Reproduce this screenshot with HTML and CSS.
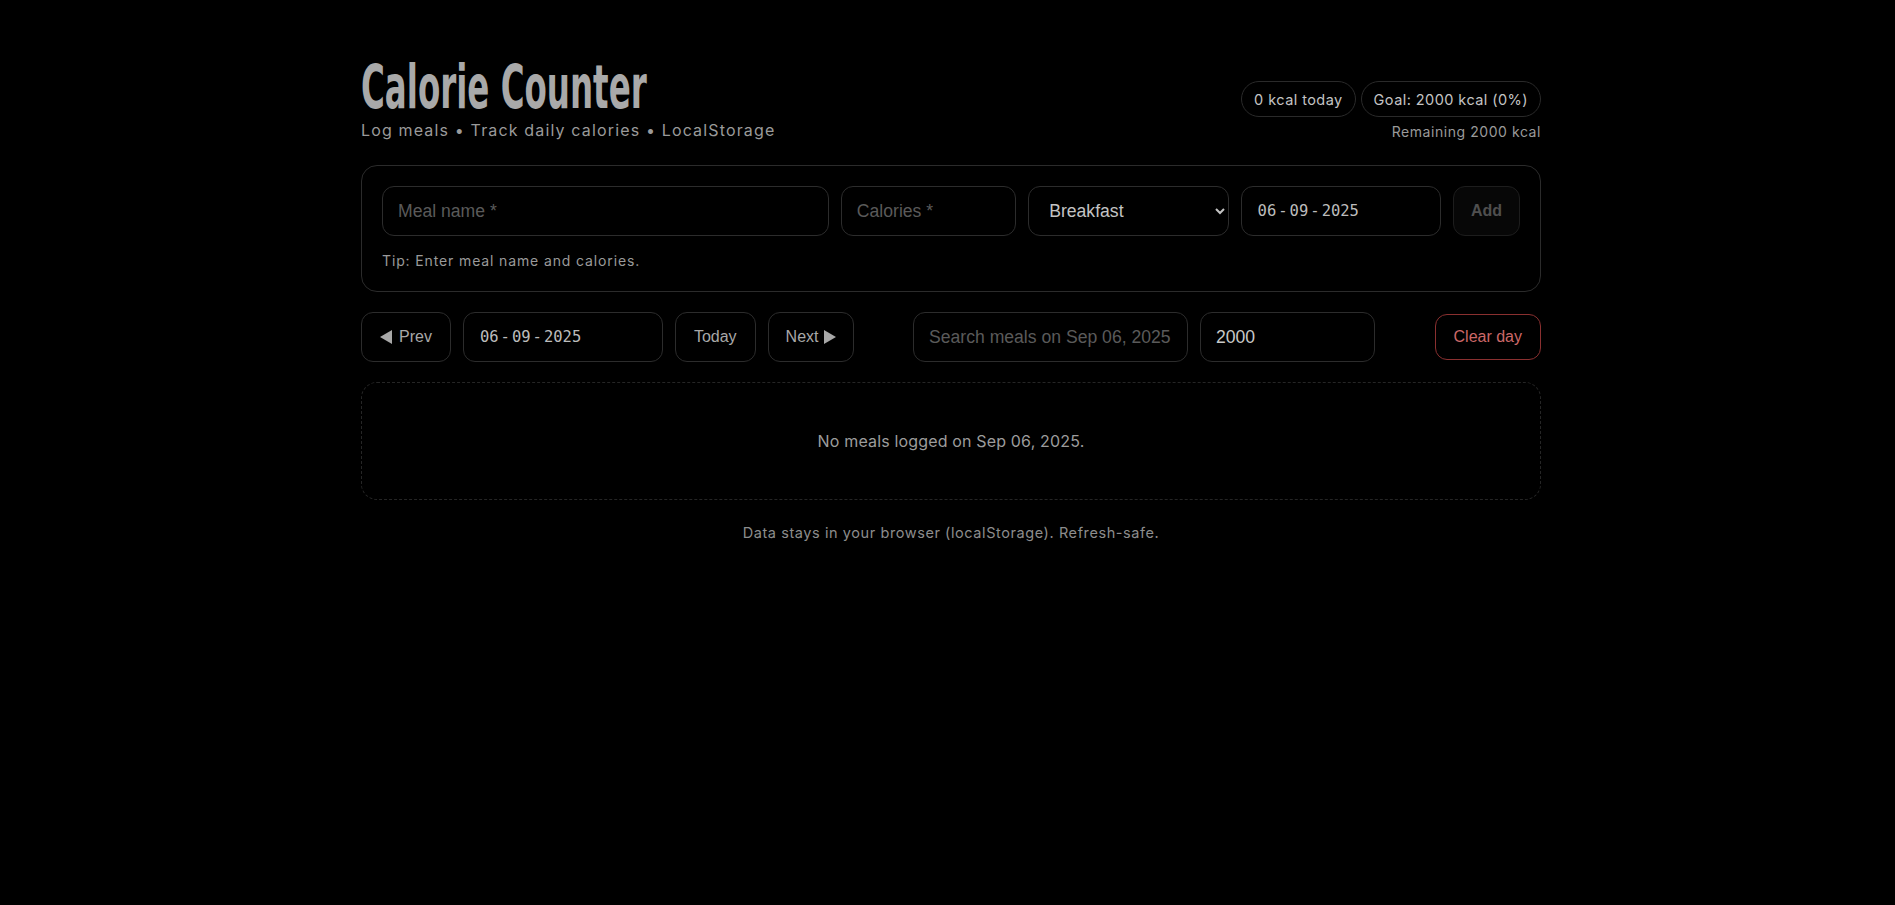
FILE: index.html
```html
<!DOCTYPE html>
<html lang="en">
<head>
<meta charset="utf-8">
<title>Calorie Counter</title>
<link rel="stylesheet" href="styles.css">
</head>
<body>
<div class="app">
  <header class="header">
    <div class="brand">
      <h1 class="title">Calorie Counter</h1>
      <p class="subtitle">Log meals • Track daily calories • LocalStorage</p>
    </div>
    <div class="stats">
      <div class="pills">
        <span class="pill">0 kcal today</span>
        <span class="pill">Goal: 2000 kcal (0%)</span>
      </div>
      <div class="remaining">Remaining 2000 kcal</div>
    </div>
  </header>

  <section class="card">
    <form class="entry">
      <input class="field" type="text" placeholder="Meal name *">
      <input class="field" type="text" placeholder="Calories *">
      <select class="field select">
        <option>Breakfast</option>
        <option>Lunch</option>
        <option>Dinner</option>
        <option>Snack</option>
      </select>
      <div class="field datefield"><span>06</span><span class="sep">-</span><span>09</span><span class="sep">-</span><span>2025</span></div>
      <button class="btn btn-add" type="button" disabled>Add</button>
    </form>
    <p class="tip">Tip: Enter meal name and calories.</p>
  </section>

  <div class="toolbar">
    <div class="group">
      <button class="btn" type="button"><svg class="tri" width="12" height="14" viewBox="0 0 12 14"><polygon points="12,0 12,14 0,7" fill="currentColor"/></svg>Prev</button>
      <div class="field datefield nav-date"><span>06</span><span class="sep">-</span><span>09</span><span class="sep">-</span><span>2025</span></div>
      <button class="btn" type="button">Today</button>
      <button class="btn btn-next" type="button">Next<svg class="tri tri-right" width="12" height="14" viewBox="0 0 12 14"><polygon points="0,0 0,14 12,7" fill="currentColor"/></svg></button>
    </div>
    <div class="group">
      <input class="field search" type="text" placeholder="Search meals on Sep 06, 2025">
      <input class="field goal" type="text" value="2000">
    </div>
    <button class="btn btn-danger" type="button">Clear day</button>
  </div>

  <div class="empty">No meals logged on Sep 06, 2025.</div>

  <p class="footer">Data stays in your browser (localStorage). Refresh-safe.</p>
</div>
</body>
</html>
```

FILE: styles.css
```css
* { box-sizing: border-box; }

html, body {
  background: #000;
}

body {
  margin: 0;
  padding: 0 0 0 7px;
  color: #bdbdbd;
  font-family: "Inter", "Open Sans", sans-serif;
}

.app {
  width: 1180px;
  margin: 0 auto;
  padding-top: 69px;
}

/* header */
.header {
  display: flex;
  justify-content: space-between;
  align-items: flex-end;
}

.title {
  margin: 0;
  font-family: "DejaVu Sans Condensed", "DejaVu Sans", sans-serif;
  font-stretch: condensed;
  font-weight: 700;
  font-size: 46px;
  line-height: 46px;
  color: #a9a9a9;
  transform: scale(0.785, 1.31);
  transform-origin: 0 39px;
  letter-spacing: 0;
}

.subtitle {
  margin: 3px 0 0;
  font-size: 16px;
  line-height: 24px;
  letter-spacing: 0.072em;
  color: #9a9a9a;
}

.stats {
  display: flex;
  flex-direction: column;
  align-items: flex-end;
}

.pills {
  display: flex;
  gap: 5px;
}

.pill {
  height: 36px;
  display: inline-flex;
  align-items: center;
  padding: 0 12px;
  border: 1px solid #2a2a2a;
  border-radius: 999px;
  font-size: 14.5px;
  letter-spacing: 0.03em;
  color: #c4c4c4;
}

.remaining {
  margin-top: 5px;
  font-size: 14px;
  line-height: 20px;
  letter-spacing: 0.04em;
  color: #9a9a9a;
}

/* card */
.card {
  margin-top: 23px;
  border: 1px solid #2b2b2b;
  border-radius: 16px;
  padding: 20px 20px 20px;
}

.entry {
  display: grid;
  grid-template-columns: 446fr 175fr 200fr 200fr 67px;
  gap: 12px;
}

.field {
  height: 50px;
  margin: 0;
  padding: 0 15px;
  background: #000;
  border: 1px solid #2c2c2c;
  border-radius: 12px;
  color: #c8c8c8;
  font-family: "Liberation Sans", Arial, sans-serif;
  font-size: 17.6px;
  outline: none;
  min-width: 0;
}

.field::placeholder {
  color: #5a5a5a;
}

.select {
  padding: 0 10px 0 16px;
  color: #c4c4c4;
  color-scheme: dark;
}

.datefield {
  display: flex;
  align-items: center;
  padding: 0 16px;
  font-family: "DejaVu Sans Mono", monospace;
  font-size: 15.5px;
  color: #bcbcbc;
}

.datefield .sep {
  padding: 0 2px;
}

.tip {
  margin: 15px 0 0;
  font-size: 14px;
  line-height: 20px;
  letter-spacing: 0.062em;
  color: #9a9a9a;
}

/* buttons */
.btn {
  height: 50px;
  margin: 0;
  padding: 0 18px;
  display: inline-flex;
  align-items: center;
  justify-content: center;
  gap: 7px;
  background: #000;
  border: 1px solid #2c2c2c;
  border-radius: 12px;
  color: #a8a8a8;
  font-family: "Liberation Sans", Arial, sans-serif;
  font-size: 16px;
  font-weight: 300;
}

.btn-next {
  gap: 5px;
  padding: 0 17px;
}

.tri {
  display: block;
  color: #a8a8a8;
}

.btn-add {
  padding: 0;
  background: #070707;
  border-color: #1d1d1d;
  color: #4f4f4f;
  font-weight: 700;
  font-size: 16px;
}

.btn-danger {
  height: 46px;
  padding: 0 18px;
  border-color: #8a3030;
  color: #cc6868;
}

/* toolbar */
.toolbar {
  margin-top: 20px;
  display: flex;
  justify-content: space-between;
  align-items: center;
}

.group {
  display: flex;
  gap: 12px;
}

.nav-date {
  width: 200px;
}

.search {
  width: 275px;
}

.goal {
  width: 175px;
}

/* empty */
.empty {
  margin-top: 20px;
  border: 1px dashed #252525;
  border-radius: 16px;
  padding: 46px 0;
  text-align: center;
  font-size: 16px;
  line-height: 24px;
  letter-spacing: 0.01em;
  color: #9c9c9c;
}

.footer {
  margin: 23px 0 0;
  text-align: center;
  font-size: 14.5px;
  line-height: 20px;
  letter-spacing: 0.04em;
  color: #8d8d8d;
}
```
